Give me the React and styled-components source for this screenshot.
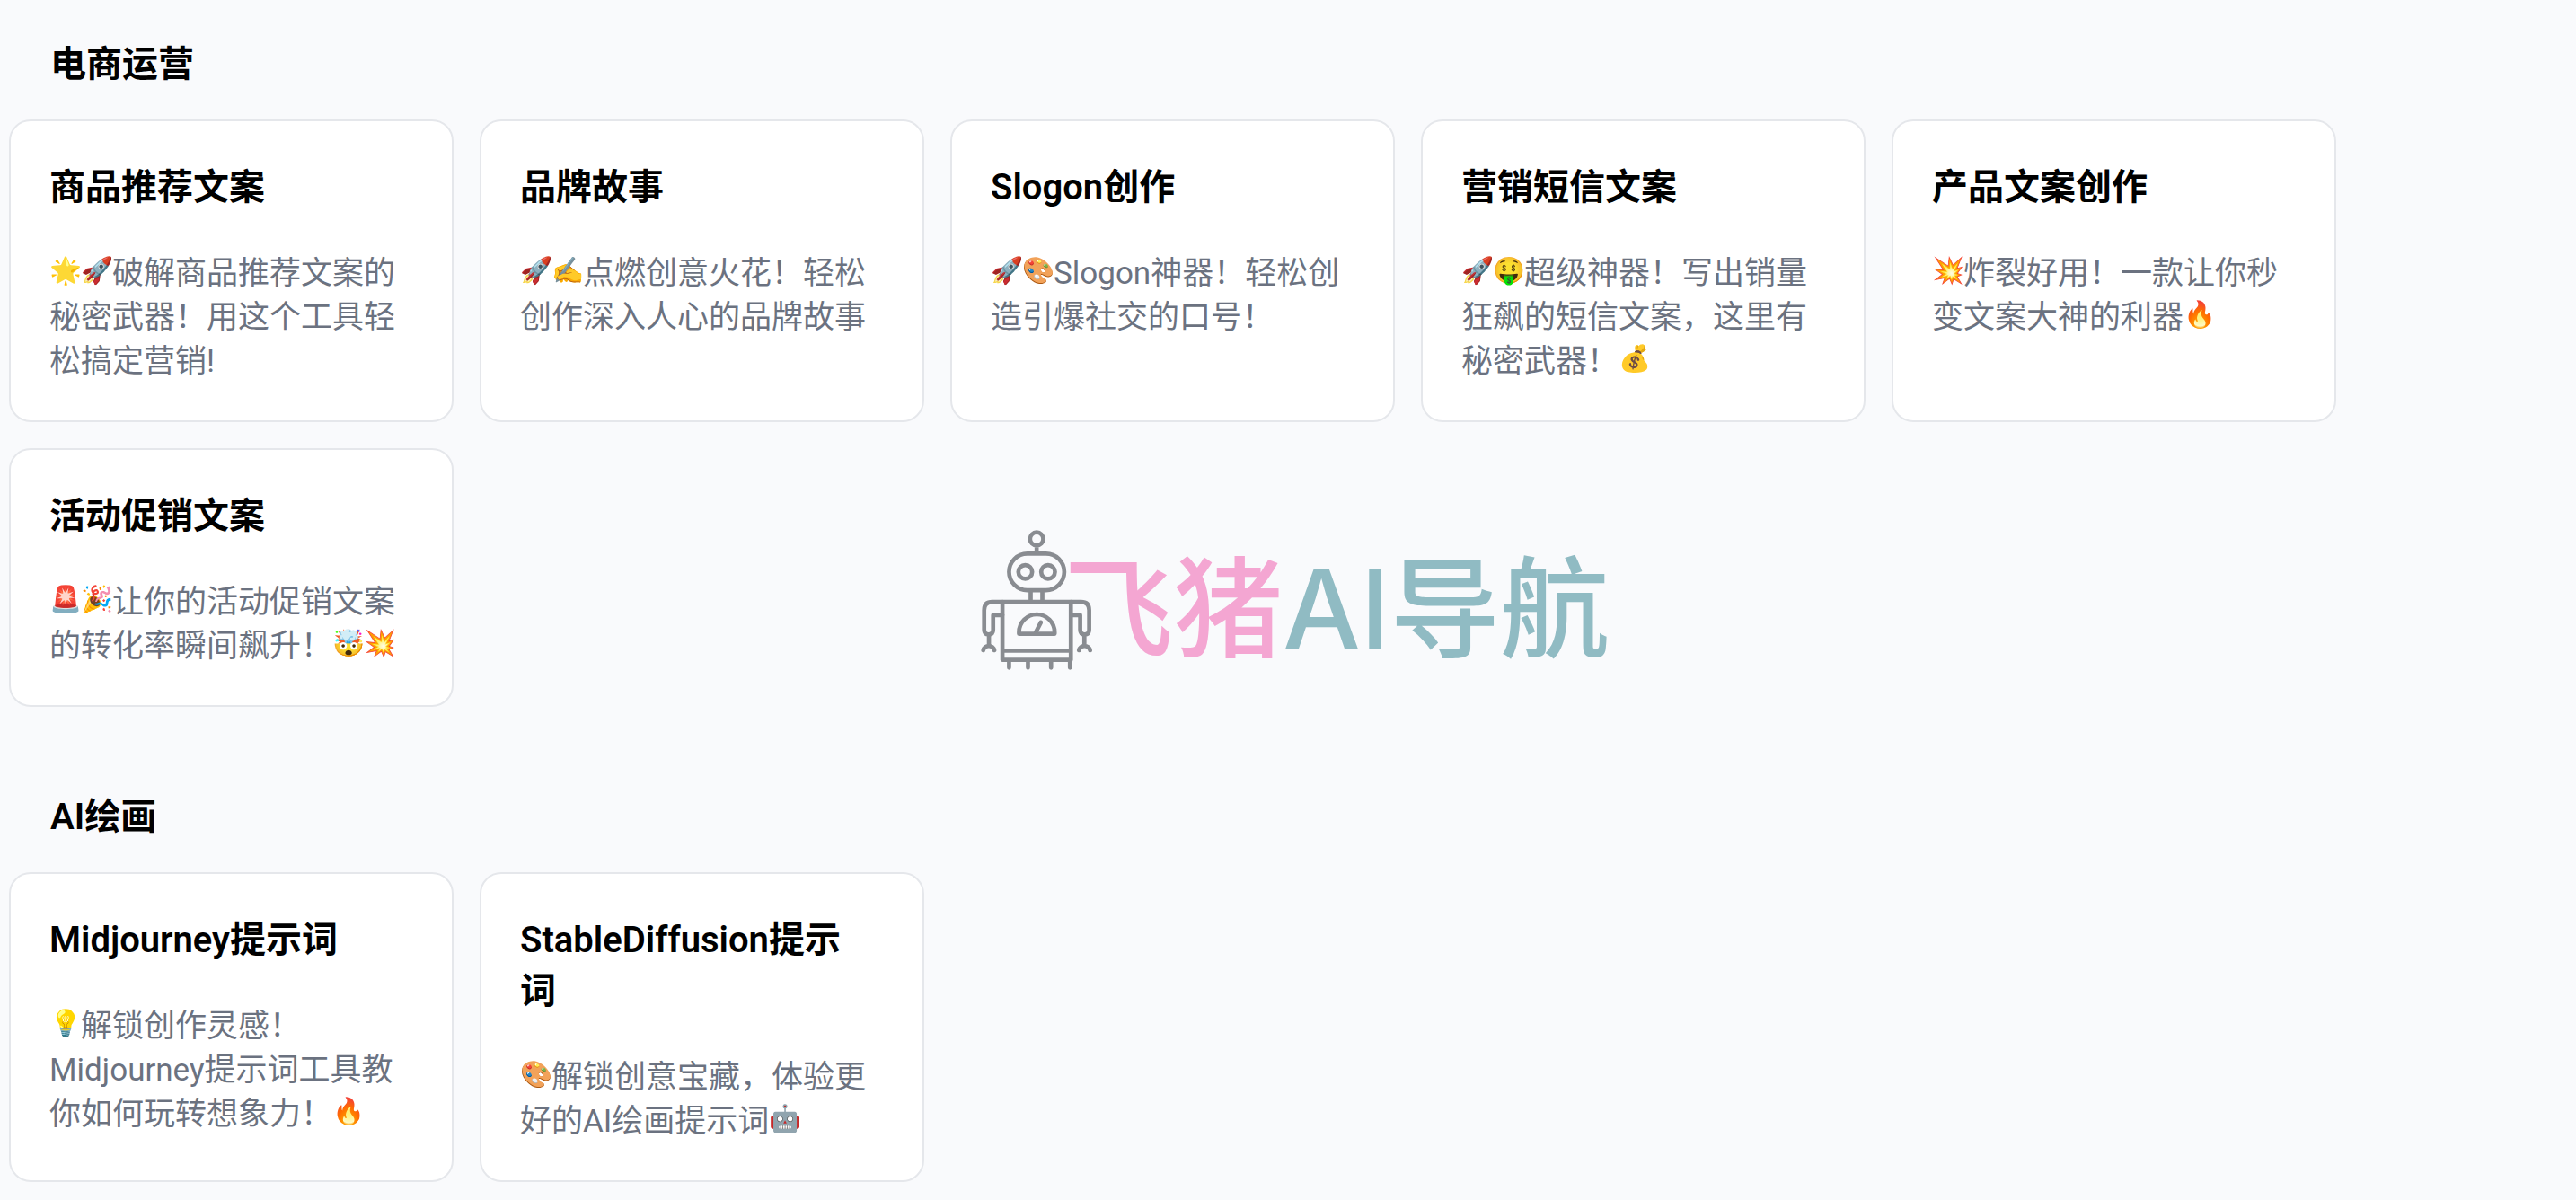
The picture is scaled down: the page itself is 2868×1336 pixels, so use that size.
import React from 'react';
import styled, { createGlobalStyle } from 'styled-components';

const GlobalStyle = createGlobalStyle`
  * {
    box-sizing: border-box;
  }

  body {
    margin: 0;
    background: #f9fafc;
    color: #000;
    font-family: Roboto, 'Noto Sans CJK SC', sans-serif;
  }
`;

const Page = styled.main`
  display: flex;
  flex-direction: column;
  gap: 94px;
  max-width: 2612px;
  padding: 43px 11px 18px 10px;
`;

const SectionTitle = styled.h2`
  margin: 0 0 33px;
  padding-left: 46px;
  font-size: 40px;
  line-height: 57px;
  font-weight: 600;
`;

const CardGrid = styled.div`
  display: grid;
  grid-template-columns: repeat(auto-fill, minmax(480px, 1fr));
  gap: 29px;
`;

const Card = styled.a`
  display: flex;
  flex-direction: column;
  gap: 43px;
  padding: 45px 54px 41px 43px;
  border: 2px solid #e5e7eb;
  border-radius: 24px;
  background: #fff;
  color: inherit;
  text-decoration: none;
`;

const CardTitle = styled.h3`
  margin: 0;
  font-size: 40px;
  line-height: 57px;
  font-weight: 600;
`;

const CardText = styled.p`
  margin: 0;
  color: #6b7280;
  font-size: 35px;
  line-height: 49px;
`;

const Emoji = styled.span`
  display: inline-flex;
  align-items: center;
  justify-content: center;
  width: 35px;
  height: 28px;
  font-size: 29px;
  line-height: 28px;
  vertical-align: 5px;
`;

const Watermark = styled.div`
  position: fixed;
  inset: 0;
  display: flex;
  align-items: center;
  justify-content: center;
  padding-left: 16px;
  pointer-events: none;
`;

const Robot = styled.svg`
  width: 124px;
  height: 156px;
  fill: none;
  stroke: #898c91;
  stroke-width: 14;
  stroke-linecap: round;
  stroke-linejoin: round;
`;

const Brand = styled.span`
  margin-left: -32px;
  padding-top: 20px;
  color: #90bbc3;
  font-family: Inter, 'Noto Sans CJK SC', sans-serif;
  font-size: 122px;
  line-height: 156px;
  font-weight: 500;
  white-space: nowrap;
`;

const BrandAccent = styled.span`
  color: #f4a6d2;
`;

const sections = [
  {
    title: '电商运营',
    cards: [
      { title: '商品推荐文案', text: '🌟🚀破解商品推荐文案的秘密武器！用这个工具轻松搞定营销!' },
      { title: '品牌故事', text: '🚀✍️点燃创意火花！轻松创作深入人心的品牌故事' },
      { title: 'Slogon创作', text: '🚀🎨Slogon神器！轻松创造引爆社交的口号！' },
      { title: '营销短信文案', text: '🚀🤑超级神器！写出销量狂飙的短信文案，这里有秘密武器！💰' },
      { title: '产品文案创作', text: '💥炸裂好用！一款让你秒变文案大神的利器🔥' },
      { title: '活动促销文案', text: '🚨🎉让你的活动促销文案的转化率瞬间飙升！🤯💥' },
    ],
  },
  {
    title: 'AI绘画',
    cards: [
      { title: 'Midjourney提示词', text: '💡解锁创作灵感！Midjourney提示词工具教你如何玩转想象力！🔥' },
      { title: 'StableDiffusion提示词', text: '🎨解锁创意宝藏，体验更好的AI绘画提示词🤖' },
    ],
  },
];

// every emoji takes the width of one Chinese character
const withEmoji = text =>
  text
    .split(/(\p{Extended_Pictographic}\uFE0F?)/u)
    .map((part, i) => (i % 2 ? <Emoji key={i}>{part}</Emoji> : part));

const RobotLogo = () => (
  <Robot viewBox="66 60 371 467" aria-hidden="true">
    <circle cx="252" cy="90" r="22" />
    <path d="M252 118V134" strokeLinecap="butt" />
    <rect x="160" y="139" width="184" height="122" rx="61" />
    <circle cx="214" cy="200" r="23" />
    <circle cx="290" cy="200" r="23" />
    <path d="M232 262V298M271 262V298" />
    <path d="M138 344H107V392Q107 408 92 408Q77 408 77 392V327Q77 300 104 300H400Q427 300 427 327V392Q427 408 412 408Q397 408 397 392V344H366" />
    <path d="M138 300V493H366V300M138 462H366" />
    <path d="M93 408V442M74 461A19 19 0 0 1 111 461" />
    <path d="M411 408V442M393 461A19 19 0 0 1 430 461" />
    <path d="M160 495V519M223 495V519M300 495V519M363 495V519" />
    <path d="M193 406V401A59 59 0 0 1 312 401V406ZM248 403L266 368" />
  </Robot>
);

export default function App() {
  return (
    <>
      <GlobalStyle />
      <Page>
        {sections.map(section => (
          <section key={section.title}>
            <SectionTitle>{section.title}</SectionTitle>
            <CardGrid>
              {section.cards.map(card => (
                <Card href="#" key={card.title}>
                  <CardTitle>{card.title}</CardTitle>
                  <CardText>{withEmoji(card.text)}</CardText>
                </Card>
              ))}
            </CardGrid>
          </section>
        ))}
      </Page>
      <Watermark>
        <RobotLogo />
        <Brand>
          <BrandAccent>飞猪</BrandAccent>AI导航
        </Brand>
      </Watermark>
    </>
  );
}
